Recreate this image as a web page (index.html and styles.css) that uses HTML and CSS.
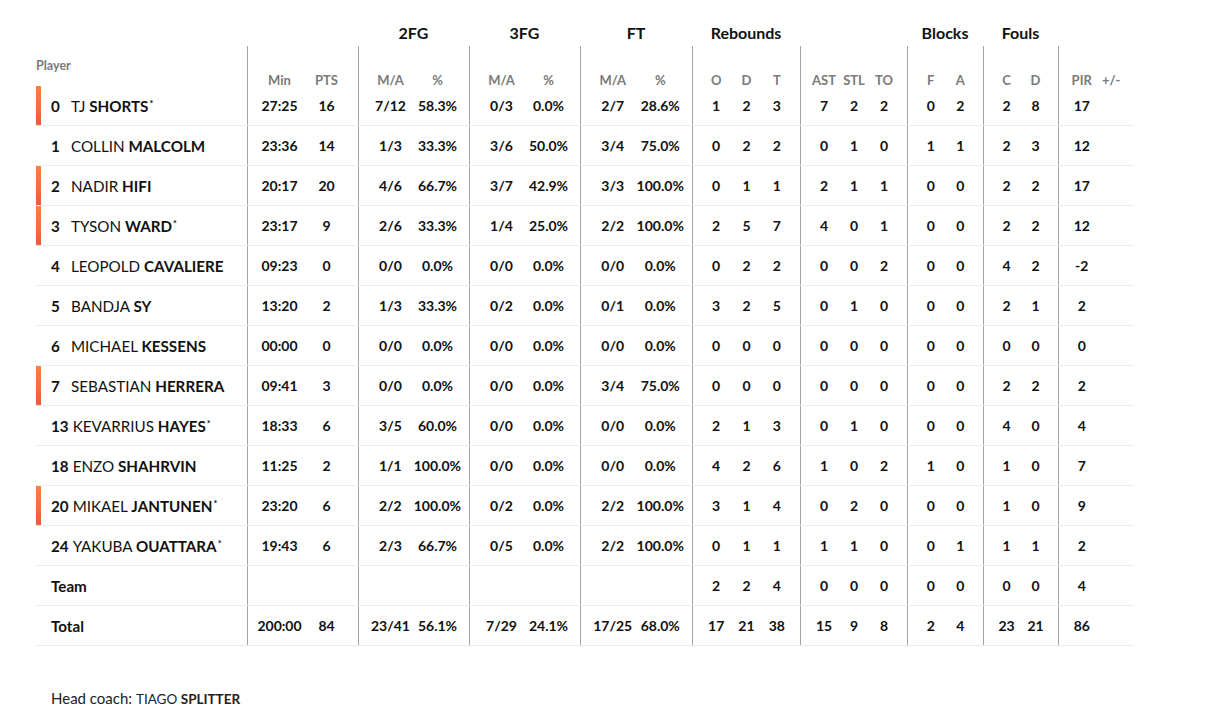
FILE: index.html
```html
<!DOCTYPE html>
<html>
<head>
<meta charset="utf-8">
<link rel="stylesheet" href="styles.css">
</head>
<body>
<div class="box">
  <div class="row groups">
    <div class="g"></div>
    <div class="g"></div>
    <div class="g">2FG</div>
    <div class="g">3FG</div>
    <div class="g">FT</div>
    <div class="g">Rebounds</div>
    <div class="g"></div>
    <div class="g">Blocks</div>
    <div class="g">Fouls</div>
    <div class="g"></div>
  </div>
  <div class="row sub">
    <div class="pl"><span class="plabel">Player</span></div>
    <div class="grp"><span>Min</span><span>PTS</span></div>
    <div class="grp"><span>M/A</span><span>%</span></div>
    <div class="grp"><span>M/A</span><span>%</span></div>
    <div class="grp"><span>M/A</span><span>%</span></div>
    <div class="grp"><span>O</span><span>D</span><span>T</span></div>
    <div class="grp"><span>AST</span><span>STL</span><span>TO</span></div>
    <div class="grp"><span>F</span><span>A</span></div>
    <div class="grp"><span>C</span><span>D</span></div>
    <div class="grp"><span>PIR</span><span>+/-</span></div>
  </div>
  <div id="rows"></div>
</div>
<p class="coach">Head coach: <span class="cn">TIAGO <b>SPLITTER</b></span></p>
<script src="app.js"></script>
</body>
</html>
```
FILE: app.js
```js
const data = [
  [true,"0","TJ","SHORTS",true,["27:25","16"],["7/12","58.3%"],["0/3","0.0%"],["2/7","28.6%"],["1","2","3"],["7","2","2"],["0","2"],["2","8"],["17",""]],
  [false,"1","COLLIN","MALCOLM",false,["23:36","14"],["1/3","33.3%"],["3/6","50.0%"],["3/4","75.0%"],["0","2","2"],["0","1","0"],["1","1"],["2","3"],["12",""]],
  [true,"2","NADIR","HIFI",false,["20:17","20"],["4/6","66.7%"],["3/7","42.9%"],["3/3","100.0%"],["0","1","1"],["2","1","1"],["0","0"],["2","2"],["17",""]],
  [true,"3","TYSON","WARD",true,["23:17","9"],["2/6","33.3%"],["1/4","25.0%"],["2/2","100.0%"],["2","5","7"],["4","0","1"],["0","0"],["2","2"],["12",""]],
  [false,"4","LEOPOLD","CAVALIERE",false,["09:23","0"],["0/0","0.0%"],["0/0","0.0%"],["0/0","0.0%"],["0","2","2"],["0","0","2"],["0","0"],["4","2"],["-2",""]],
  [false,"5","BANDJA","SY",false,["13:20","2"],["1/3","33.3%"],["0/2","0.0%"],["0/1","0.0%"],["3","2","5"],["0","1","0"],["0","0"],["2","1"],["2",""]],
  [false,"6","MICHAEL","KESSENS",false,["00:00","0"],["0/0","0.0%"],["0/0","0.0%"],["0/0","0.0%"],["0","0","0"],["0","0","0"],["0","0"],["0","0"],["0",""]],
  [true,"7","SEBASTIAN","HERRERA",false,["09:41","3"],["0/0","0.0%"],["0/0","0.0%"],["3/4","75.0%"],["0","0","0"],["0","0","0"],["0","0"],["2","2"],["2",""]],
  [false,"13","KEVARRIUS","HAYES",true,["18:33","6"],["3/5","60.0%"],["0/0","0.0%"],["0/0","0.0%"],["2","1","3"],["0","1","0"],["0","0"],["4","0"],["4",""]],
  [false,"18","ENZO","SHAHRVIN",false,["11:25","2"],["1/1","100.0%"],["0/0","0.0%"],["0/0","0.0%"],["4","2","6"],["1","0","2"],["1","0"],["1","0"],["7",""]],
  [true,"20","MIKAEL","JANTUNEN",true,["23:20","6"],["2/2","100.0%"],["0/2","0.0%"],["2/2","100.0%"],["3","1","4"],["0","2","0"],["0","0"],["1","0"],["9",""]],
  [false,"24","YAKUBA","OUATTARA",true,["19:43","6"],["2/3","66.7%"],["0/5","0.0%"],["2/2","100.0%"],["0","1","1"],["1","1","0"],["0","1"],["1","1"],["2",""]],
  [false,"","Team","",false,["",""],["",""],["",""],["",""],["2","2","4"],["0","0","0"],["0","0"],["0","0"],["4",""]],
  [false,"","Total","",false,["200:00","84"],["23/41","56.1%"],["7/29","24.1%"],["17/25","68.0%"],["17","21","38"],["15","9","8"],["2","4"],["23","21"],["86",""]]
];
const host = document.getElementById("rows");
for (const r of data) {
  const row = document.createElement("div");
  row.className = "row data";
  let pl = '<div class="pl' + (r[0] ? ' on' : '') + '">';
  if (r[1] === "") {
    pl += '<b class="tt">' + r[2] + '</b>';
  } else {
    pl += '<b class="num">' + r[1] + '</b><span class="nm">' + r[2] + ' <b>' + r[3] + '</b>' + (r[4] ? '<sup>*</sup>' : '') + '</span>';
  }
  pl += '</div>';
  let html = pl;
  for (let i = 5; i < 14; i++) {
    html += '<div class="grp">' + r[i].map(v => '<span>' + v + '</span>').join('') + '</div>';
  }
  row.innerHTML = html;
  host.appendChild(row);
}
```
FILE: styles.css
```css
* { box-sizing: border-box; }
body {
  margin: 0;
  background: #fff;
  font-family: Lato, "Noto Sans", sans-serif;
  color: #111;
}
.box {
  padding: 20px 0 0 36px;
  width: 1134px;
}
.row {
  display: grid;
  grid-template-columns: 211px 111px 111px 111px 112px 108px 107px 76px 75px 76px;
}
.groups { height: 26px; }
.groups .g {
  text-align: center;
  font-weight: 700;
  font-size: 16px;
  line-height: 26px;
  padding-bottom: 1px;
}
.grp {
  display: flex;
  padding: 0 8px;
  border-left: 1px solid #a3a3a3;
  align-items: center;
}
.grp span {
  flex: 1 1 0;
  text-align: center;
  white-space: nowrap;
}
.sub { height: 40px; }
.sub .grp {
  align-items: flex-start;
  padding-top: 27px;
  line-height: 15px;
  font-size: 13px;
  font-weight: 700;
  color: #7a7a7a;
}
.plabel {
  display: block;
  padding-top: 12px;
  font-size: 12.5px;
  font-weight: 700;
  color: #7a7a7a;
}
.data {
  height: 40px;
  border-bottom: 1px solid #ececec;
}
.data .grp {
  font-size: 14px;
  font-weight: 700;
}
.data .pl {
  display: flex;
  align-items: center;
  padding-left: 10px;
  border-left: 5px solid transparent;
  font-size: 15.2px;
  white-space: nowrap;
}
.data .pl.on {
  border-image: linear-gradient(#f5843a, #ee5b3b) 1;
}
.num {
  min-width: 16px;
  margin-right: 4px;
  font-weight: 700;
}
.nm { font-weight: 400; }
.nm b { font-weight: 700; }
.nm sup {
  font-size: 9px;
  font-weight: 700;
  vertical-align: 5px;
  line-height: 0;
  margin-left: 1px;
}
.tt { font-weight: 700; }
.coach {
  margin: 43px 0 0 51px;
  font-size: 15px;
  color: #222;
}
.cn { font-size: 13.5px; }
.cn b { font-weight: 700; }
```
